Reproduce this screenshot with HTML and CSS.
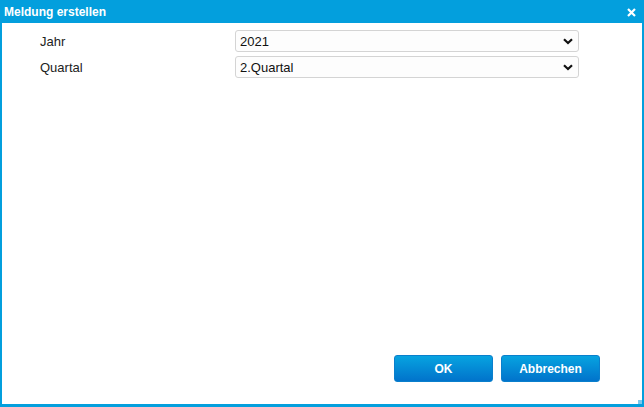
FILE: index.html
```html
<!DOCTYPE html>
<html lang="de">
<head>
  <meta charset="UTF-8" />
  <title>Meldung erstellen</title>
  <link rel="stylesheet" href="styles.css">
</head>
<body>
  <div class="dialog">
    <div class="titlebar">
      <span class="title">Meldung erstellen</span>
      <svg class="close" width="9" height="9" viewBox="0 0 9 9">
        <path d="M1 1 L8 8 M8 1 L1 8" stroke="#fff" stroke-width="2.2" />
      </svg>
    </div>

    <div class="content">
      <div class="row">
        <label>Jahr</label>
        <div class="select">
          <span>2021</span>
          <svg width="10" height="7" viewBox="0 0 10 7">
            <path d="M1 1.2 L5 5 L9 1.2" fill="none" stroke="#111" stroke-width="2.2" />
          </svg>
        </div>
      </div>
      <div class="row">
        <label>Quartal</label>
        <div class="select">
          <span>2.Quartal</span>
          <svg width="10" height="7" viewBox="0 0 10 7">
            <path d="M1 1.2 L5 5 L9 1.2" fill="none" stroke="#111" stroke-width="2.2" />
          </svg>
        </div>
      </div>
    </div>

    <div class="buttons">
      <button>OK</button>
      <button>Abbrechen</button>
    </div>

    <div class="grip"></div>
  </div>
</body>
</html>
```

FILE: styles.css
```css
body {
  margin: 0;
  font-family: 'Liberation Sans', Arial, sans-serif;
  font-size: 13px;
  color: #222;
}

.dialog {
  position: relative;
  width: 644px;
  height: 407px;
  box-sizing: border-box;
  border: 2px solid #039fdd;
  border-top: none;
  border-bottom-width: 3px;
  background: #fff;
  display: flex;
  flex-direction: column;
}

.titlebar {
  height: 23px;
  margin: 0 -2px;
  padding: 0 8px 0 4px;
  background: #039fdd;
  display: flex;
  align-items: center;
  justify-content: space-between;
}

.title {
  color: #fff;
  font-weight: bold;
  font-size: 12px;
}

.close {
  margin-top: 2px;
}

.content {
  padding: 7px 0 0 38px;
  display: flex;
  flex-direction: column;
  gap: 4px;
  flex: 1;
}

.row {
  display: flex;
  align-items: center;
}

.row label {
  width: 195px;
}

.select {
  width: 344px;
  height: 22px;
  box-sizing: border-box;
  border: 1px solid #d4d4d4;
  border-radius: 3px;
  background: #fdfdfd;
  padding: 0 5px 0 4px;
  display: flex;
  align-items: center;
  justify-content: space-between;
  color: #111;
}

.buttons {
  display: flex;
  justify-content: flex-end;
  gap: 8px;
  padding: 0 42px 22px 0;
}

.buttons button {
  width: 99px;
  height: 27px;
  border: 1px solid #0a7fcc;
  border-radius: 3px;
  background: linear-gradient(#07a3e0, #0173cb);
  color: #fff;
  font-family: 'Liberation Sans', Arial, sans-serif;
  font-size: 12px;
  font-weight: bold;
  cursor: pointer;
}

.grip {
  position: absolute;
  right: 0;
  bottom: 0;
  width: 4px;
  height: 4px;
  background: #7cc9ee;
}
```
